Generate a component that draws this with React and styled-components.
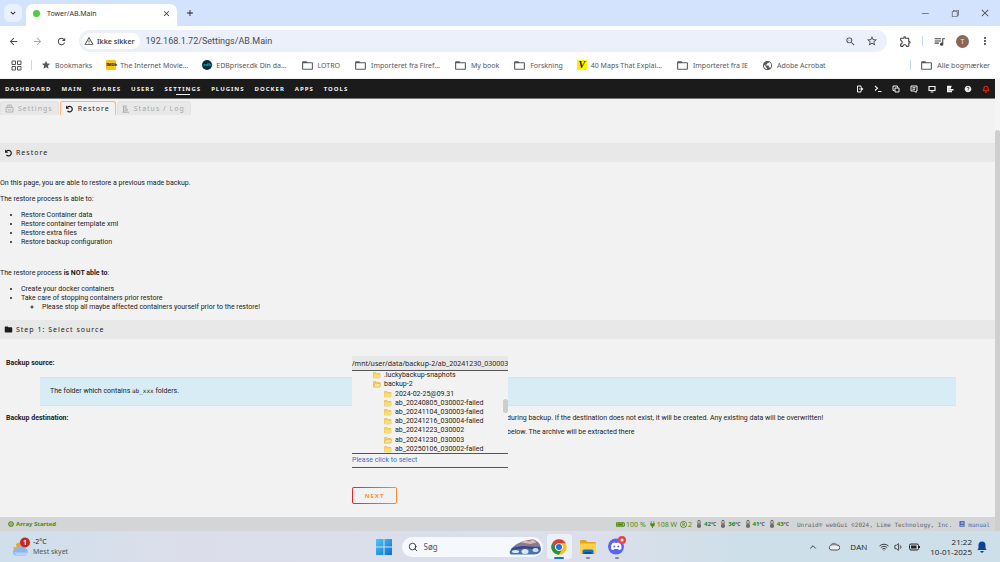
import React, { useState } from 'react';
import styled, { createGlobalStyle, css } from 'styled-components';
import {
  MdAdd,
  MdArrowBack,
  MdArrowForward,
  MdClose,
  MdFolder,
  MdFolderOpen,
  MdHelp,
  MdKeyboardArrowDown,
  MdMoreVert,
  MdOutlineExtension,
  MdPublic,
  MdQueueMusic,
  MdRefresh,
  MdStar,
  MdStarBorder,
  MdWarningAmber,
  MdZoomOut,
} from 'react-icons/md';
import { FaBatteryFull, FaBook, FaPlug, FaRegUserCircle, FaThermometerHalf } from 'react-icons/fa';
import { VscChromeClose, VscChromeMinimize, VscChromeRestore } from 'react-icons/vsc';
import { ChevronUp, Search, Volume1, Wifi } from 'lucide-react';

const GlobalStyle = createGlobalStyle`
  * {
    box-sizing: border-box;
  }

  body {
    margin: 0;
    background: #f2f2f2;
    font-family: 'Noto Sans', sans-serif;
    font-size: 6px;
    color: #1c1b1b;
  }

  button {
    border: none;
    background: none;
    padding: 0;
    font: inherit;
    color: inherit;
    cursor: pointer;
  }

  a {
    color: inherit;
    text-decoration: none;
  }

  svg {
    display: block;
    flex: none;
  }
`;

const bodyFont = css`
  font-family: Roboto, 'Noto Sans', sans-serif;
  font-size: 7px;
`;

const Screen = styled.div`
  display: flex;
  flex-direction: column;
  min-height: 100vh;
`;

/* ---------- browser ---------- */

const TabStrip = styled.div`
  display: flex;
  align-items: flex-end;
  height: 26px;
  padding-left: 4px;
  background: #d3e2fd;
`;

const TabSearch = styled.button`
  display: grid;
  place-items: center;
  width: 18px;
  height: 18px;
  margin-bottom: 4px;
  border-radius: 6px;
  background: #e9f0fe;
`;

const BrowserTab = styled.div`
  display: flex;
  align-items: center;
  width: 151px;
  height: 22px;
  margin-left: 4px;
  padding: 0 6px 4px 7px;
  border-radius: 7px 7px 0 0;
  background: #fff;
  font-size: 7px;
  color: #333;

  span {
    flex: 1;
  }
`;

const Favicon = styled.i`
  width: 7px;
  height: 7px;
  margin-right: 7px;
  border-radius: 50%;
  background: #4fce3a;
`;

const NewTab = styled.button`
  margin: 0 auto 8px 8px;
`;

const WindowControls = styled.div`
  display: flex;
  gap: 20px;
  margin: 0 10px 8px 0;
  color: #444;
`;

const Toolbar = styled.div`
  display: flex;
  align-items: center;
  height: 30px;
  padding: 0 9px 0 8px;
  background: #fff;
  color: #444;
`;

const NavButtons = styled.div`
  display: flex;
  gap: 13px;
  margin-right: 12px;

  button:nth-child(2) {
    color: #aaa;
  }
`;

const Omnibox = styled.div`
  display: flex;
  align-items: center;
  flex: 1;
  height: 22px;
  padding: 0 9px 0 3px;
  border-radius: 11px;
  background: #ebf0fa;
`;

const SecurityChip = styled.button`
  display: flex;
  align-items: center;
  gap: 3px;
  height: 16px;
  padding: 0 5px 0 2px;
  border-radius: 8px;
  background: #fff;
  font-size: 7px;
  font-weight: 600;
  white-space: nowrap;
`;

const Url = styled.input`
  flex: 1;
  min-width: 0;
  margin-left: 6px;
  padding: 0;
  border: none;
  outline: none;
  background: none;
  font-family: Roboto, 'Noto Sans', sans-serif;
  font-size: 9px;
  color: #4a4d52;
`;

const OmniActions = styled.div`
  display: flex;
  gap: 10px;
`;

const ToolbarActions = styled.div`
  display: flex;
  align-items: center;
  gap: 10px;
  margin-left: 12px;
`;

const Divider = styled.span`
  width: 1px;
  height: 10px;
  background: #c3d7f8;
`;

const Avatar = styled.button`
  width: 13px;
  height: 13px;
  border-radius: 50%;
  background: #8d6557;
  color: #f3e9e5;
  font-size: 7px;
  line-height: 13px;
`;

const BookmarkBar = styled.nav`
  display: flex;
  align-items: center;
  gap: 9px;
  height: 22px;
  margin-bottom: 1px;
  padding: 0 10px 4px 11px;
  background: #fff;
  font-size: 7px;
  color: #55585c;
  white-space: nowrap;
`;

const Bookmarks = styled.div`
  display: flex;
  align-items: center;
  gap: 14px;
  margin-right: auto;
`;

const Bookmark = styled.a`
  display: flex;
  align-items: center;
  gap: 4px;
`;

const SiteIcon = styled.i`
  display: grid;
  place-items: center;
  width: 10px;
  height: 10px;
  border-radius: ${(p) => (p.$round ? '50%' : '1px')};
  background: ${(p) => p.$bg};
  color: ${(p) => p.$fg};
  font-size: 4px;
  font-weight: 800;
  font-style: normal;
  line-height: 10px;
`;

const SerifMark = styled.b`
  font-family: 'Liberation Serif', serif;
  font-size: 10px;
  font-style: italic;
`;

/* ---------- unraid page ---------- */

const Viewport = styled.div`
  display: flex;
  flex: 1;
`;

const Page = styled.div`
  display: flex;
  flex-direction: column;
  flex: 1;
  min-width: 0;
  background: #f2f2f2;
`;

const Scrollbar = styled.div`
  width: 5px;
  padding-top: 51px;
  background: #f4f4f4;

  &::before {
    content: '';
    display: block;
    height: 100%;
    border-radius: 3px 3px 0 0;
    background: #cfcfcf;
  }
`;

const Menu = styled.nav`
  display: flex;
  align-items: center;
  height: 20px;
  border-bottom: 1px solid #777;
  background: #1c1b1b;
  color: #f2f2f2;
`;

const MenuItem = styled.a`
  position: relative;
  padding: 0 5px;
  font-size: 6px;
  font-weight: 700;
  letter-spacing: 1px;
  line-height: 12px;
  text-transform: uppercase;

  ${(p) =>
    p.$active &&
    css`
      &::after {
        content: '';
        position: absolute;
        left: 16px;
        right: 16px;
        bottom: 0;
        height: 1px;
        background: #f2f2f2;
      }
    `}
`;

const MenuTools = styled.div`
  display: flex;
  gap: 10px;
  margin-left: auto;
  padding-right: 5px;
`;

const ToolButton = styled.button`
  color: ${(p) => (p.$alert ? '#f0260a' : '#f2f2f2')};
`;

const Tabs = styled.div`
  display: flex;
  gap: 1px;
  height: 16px;
  padding-top: 2px;
`;

const Tab = styled.button`
  display: flex;
  align-items: center;
  gap: 4px;
  padding: 0 5px 0 4px;
  border: 1px solid ${(p) => (p.$active ? '#ffb27c' : '#e2e2e2')};
  border-bottom: none;
  border-radius: 3px 3px 0 0;
  background: ${(p) => (p.$active ? '#f2f2f2' : '#e8e8e8')};
  color: ${(p) => (p.$active ? '#1c1b1b' : '#a9a9a9')};
  font-size: 7px;
  letter-spacing: 1px;
  line-height: 12px;
`;

const Title = styled.h2`
  display: flex;
  align-items: center;
  gap: 3px;
  height: 19px;
  margin: 0;
  padding: 0 5px 0 4px;
  background: #e8e8e8;
  font-size: 7px;
  font-weight: 400;
  letter-spacing: 1px;
`;

const Content = styled.main`
  ${bodyFont}
  flex: 1;
  padding-top: 28px;

  h2 {
    font-family: 'Noto Sans', sans-serif;
  }
`;

const Intro = styled.section`
  padding: 17px 0 8px;
  line-height: 9px;

  p {
    margin: 0 0 7px;
  }

  ul {
    margin: 0 0 22px;
    padding-left: 21px;
  }

  ul ul,
  ul:last-child {
    margin-bottom: 0;
  }
`;

const Form = styled.form`
  padding-top: 17px;
`;

const Field = styled.div`
  display: grid;
  grid-template-columns: 346px 1fr;
  padding-left: 6px;
  line-height: 15px;

  > label {
    font-weight: 700;
  }
`;

const Picker = styled.div`
  position: relative;
  width: 156px;
`;

const PathInput = styled.input`
  display: block;
  width: 100%;
  height: 15px;
  padding: 0;
  border: none;
  border-bottom: 1px solid #555;
  border-radius: 0;
  outline: none;
  background: ${(p) => (p.$filled ? '#e8e8e8' : 'transparent')};
  font-family: ${(p) => (p.$filled ? "'Noto Sans', sans-serif" : 'inherit')};
  font-size: 7px;
  color: #1c1b1b;

  &::placeholder {
    color: #486dba;
    opacity: 1;
  }
`;

const Tree = styled.div`
  position: absolute;
  top: 15px;
  left: 0;
  right: 0;
  z-index: 1;
  display: flex;
  align-items: flex-end;
  height: 83px;
  overflow: hidden;
  border-bottom: 1px solid #555;
  background: #f2f2f2;
`;

const TreeList = styled.ul`
  display: grid;
  grid-auto-rows: 1fr;
  flex: 1;
  height: 83px;
  margin: 0;
  padding: 0;
  list-style: none;
`;

const TreeItem = styled.li`
  display: flex;
  align-items: center;
  gap: 3px;
  padding: 1px 0 0 ${(p) => 10 + p.$level * 11}px;
  line-height: 8px;
  white-space: nowrap;
`;

const TreeThumb = styled.span`
  align-self: center;
  width: 5px;
  height: 14px;
  border-radius: 3px;
  margin-bottom: 12px;
  background: #cdcdcd;
`;

const Help = styled.blockquote`
  margin: 6px 39px 5px 40px;
  padding: 7px 10px;
  border: solid #c8e7f0;
  border-width: 1px 0;
  background: #d8ecf5;
  line-height: 13px;

  code {
    font-family: 'DejaVu Sans Mono', monospace;
    font-size: 6px;
    line-height: 1;
  }
`;

const Notes = styled.div`
  padding: 0 0 14px 155px;
  line-height: 14px;

  p {
    margin: 0;
    white-space: nowrap;
  }
`;

const NextButton = styled.button`
  width: 45px;
  height: 17px;
  margin: 19px 0 12px 352px;
  border: 1px solid transparent;
  border-radius: 2px;
  background:
    linear-gradient(#f2f2f2, #f2f2f2) padding-box,
    linear-gradient(90deg, #e22828, #ff8c2f) border-box;
  color: #ff8c2f;
  font-family: 'Noto Sans', sans-serif;
  font-size: 6px;
  font-weight: 700;
  letter-spacing: 1px;
`;

const Footer = styled.footer`
  display: flex;
  align-items: center;
  height: 14px;
  padding: 0 5px 0 8px;
  background: #d4d5d6;
  color: #4f8a10;
`;

const ArrayState = styled.strong`
  display: flex;
  align-items: center;
  gap: 2px;
  margin-right: auto;
`;

const Stats = styled.div`
  display: flex;
  align-items: center;
  gap: 3px;
`;

const Stat = styled.span`
  display: flex;
  align-items: center;
  gap: 1px;
  font-size: 7px;
`;

const Temp = styled.span`
  display: flex;
  align-items: center;
  gap: 1px;
  font-weight: 700;
  color: #0b8a1c;

  svg,
  small {
    color: #555;
  }

  small {
    font-size: 5px;
  }
`;

const Copyright = styled.div`
  display: flex;
  align-items: center;
  gap: 7px;
  margin-left: 8px;
  font-family: 'DejaVu Sans Mono', monospace;
  color: #666;
  white-space: pre;

  a {
    display: flex;
    align-items: center;
    gap: 3px;
    color: #486dba;
  }
`;

/* ---------- windows taskbar ---------- */

const Taskbar = styled.div`
  display: grid;
  grid-template-columns: 1fr auto 1fr;
  align-items: center;
  height: 31px;
  background: linear-gradient(90deg, #cfdfec 0%, #dbdeea 18%, #dadfeb 60%, #cddfe9 75%, #cddfe9 100%);
  font-size: 7px;
  line-height: 10px;
  color: #222;
`;

const Weather = styled.button`
  display: flex;
  align-items: center;
  gap: 3px;
  padding-left: 12px;
  text-align: left;

  small {
    display: block;
    font-size: 7px;
    color: #555;
  }
`;

const Apps = styled.div`
  display: flex;
  align-items: center;
  gap: 4px;
  padding-left: 5px;
`;

const SearchBox = styled.label`
  display: flex;
  align-items: center;
  gap: 6px;
  width: 141px;
  height: 20px;
  margin-left: 6px;
  padding: 0 1px 0 6px;
  border-radius: 10px;
  background: #f5f8fc;

  input {
    flex: 1;
    min-width: 0;
    padding: 0;
    border: none;
    outline: none;
    background: none;
    font: inherit;
    font-size: 8px;
  }

  input::placeholder {
    color: #555;
    opacity: 1;
  }
`;

const AppButton = styled.button`
  display: flex;
  flex-direction: column;
  align-items: center;
  justify-content: flex-end;
  gap: 2px;
  width: 25px;
  height: 25px;
  border-radius: 3px;
  background: ${(p) => (p.$active ? '#ecf1f8' : 'transparent')};

  &::after {
    content: '';
    width: ${(p) => (p.$active ? 10 : 4)}px;
    height: 2px;
    border-radius: 1px;
    background: ${(p) => (p.$active ? '#0f78d4' : '#808890')};
  }
`;

const Tray = styled.div`
  display: flex;
  align-items: center;
  justify-content: flex-end;
  padding-right: 13px;
  font-family: 'Open Sans', 'Noto Sans', sans-serif;
  font-size: 8px;
`;

const TrayGroup = styled.div`
  display: flex;
  align-items: center;
  gap: ${(p) => p.$gap}px;
  margin-right: ${(p) => p.$after}px;
`;

const Clock = styled.time`
  margin-right: 5px;
  text-align: right;
`;

/* ---------- drawings ---------- */

const UndoIcon = () => (
  <svg width="9" height="8" viewBox="0 0 18 16" fill="none" stroke="currentColor" strokeWidth="2.4">
    <path d="M5 4.500A5.500 5.500 0 1 1 5 12" />
    <path d="M2 1v6.500h6.500z" fill="currentColor" stroke="none" />
  </svg>
);

const SettingsTabIcon = () => (
  <svg width="9" height="9" viewBox="0 0 18 18" fill="none" stroke="currentColor" strokeWidth="1.6">
    <path d="M4 7l1-5h8l1 5M2 7h14v9H2zM5 11.500h8M7 4.500h4" />
  </svg>
);

const LogTabIcon = () => (
  <svg width="8" height="8" viewBox="0 0 16 16" fill="none" stroke="currentColor" strokeWidth="1.8">
    <path d="M1 2h9M3 2v12M3 5.500h7M6 8.500h6M3 11.500h8M1 14.500h13" />
  </svg>
);

const AppsGridIcon = () => (
  <svg width="11" height="11" viewBox="0 0 22 22" fill="none" stroke="#555" strokeWidth="2">
    <path d="M2 2h7v7H2zM13 2h7v7h-7zM2 13h7v7H2zM13 13h7v7h-7z" />
  </svg>
);

const LogoutIcon = () => (
  <svg width="8" height="8" viewBox="0 0 16 16" fill="none" stroke="currentColor" strokeWidth="2">
    <path d="M10 5V2H3v12h7v-3M6 8h5" />
    <path d="M10 4l5 4-5 4z" fill="currentColor" stroke="none" />
  </svg>
);

const TerminalIcon = () => (
  <svg width="8" height="8" viewBox="0 0 16 16" fill="none" stroke="currentColor" strokeWidth="2.2">
    <path d="M2 2l5 4.500L2 11M8 13h7" />
  </svg>
);

const CopyIcon = () => (
  <svg width="8" height="8" viewBox="0 0 16 16" fill="none" stroke="currentColor" strokeWidth="2">
    <path d="M6 6h8v8H6zM11 5V2H2v9h3" />
  </svg>
);

const FeedbackIcon = () => (
  <svg width="8" height="8" viewBox="0 0 16 16" fill="none" stroke="currentColor" strokeWidth="2">
    <path d="M2 2h12v10h-2v3l-3-3H2zM5 5.500h6M5 8.500h5" />
  </svg>
);

const MonitorIcon = () => (
  <svg width="8" height="8" viewBox="0 0 16 16" fill="none" stroke="currentColor" strokeWidth="2.4">
    <path d="M2 3h12v8H2zM5 14h6" />
  </svg>
);

const LogIcon = () => (
  <svg width="8" height="8" viewBox="0 0 16 16" fill="none" stroke="currentColor" strokeWidth="2.6">
    <path d="M2 3h9M2 6h8M2 9.500h13M2 13h10M3.500 2v12" />
  </svg>
);

const AlertIcon = () => (
  <svg width="8" height="8" viewBox="0 0 16 16" fill="none" stroke="currentColor" strokeWidth="2.4">
    <path d="M2 11.500c2-1 2-3 2-5a4 4 0 0 1 8 0c0 2 0 4 2 5zM6 14.500h4" />
  </svg>
);

const FolderPic = ({ open }) => (
  <svg width="8" height="8" viewBox="0 0 16 16">
    <path d="M1 3h5l2 2h6v9H1z" fill="#f6cf4f" stroke="#dfae38" />
    {open ? (
      <path d="M4 7h12l-3 7H1z" fill="#fbe595" stroke="#dcae43" />
    ) : (
      <path d="M1 7h13v7H1z" fill="#fbdc74" />
    )}
  </svg>
);

const WeatherIcon = () => (
  <svg width="18" height="20" viewBox="0 0 36 40">
    <path d="M2 20l7 1-1-7 8-4 4 14-12 6z" fill="#f7a21b" />
    <path d="M9 37a7 7 0 0 1 0-14 10 10 0 0 1 17-1 8 8 0 0 1 1 15z" fill="#8bb4f0" />
    <path d="M9 36a6 6 0 0 1-5-5h28c-1 4-3 5-5 5z" fill="#b8d3fb" />
    <circle cx="26" cy="11" r="10" fill="#c42b1c" />
    <text x="26" y="16" textAnchor="middle" fontSize="14" fontWeight="600" fill="#fff">
      1
    </text>
  </svg>
);

const WindowsLogo = () => (
  <svg width="16" height="16" viewBox="0 0 32 32">
    <defs>
      <linearGradient id="win" x1="0" y1="0" x2="1" y2="1">
        <stop offset="0" stopColor="#4cc8f5" />
        <stop offset="1" stopColor="#0a6fd0" />
      </linearGradient>
    </defs>
    <path d="M0 0h15v15H0zM17 0h15v15H17zM0 17h15v15H0zM17 17h15v15H17z" fill="url(#win)" />
  </svg>
);

const SearchArt = () => (
  <svg width="33" height="17" viewBox="0 0 66 34">
    <path d="M2 26C8 14 28 4 48 3c10 3 16 12 16 20-1 8-8 10-16 10H6c-5 0-5-4-4-7z" fill="#4573ad" />
    <path d="M10 17C20 8 34 4 48 3c9 3 13 8 15 14z" fill="#8d7796" />
    <path d="M24 9l10-5 6 3 8-4 7 6-12 3z" fill="#d9b8b5" />
    <path d="M6 20l22-4 34 3v4L30 21 4 24z" fill="#3d4777" />
    <ellipse cx="13" cy="27" rx="7" ry="3" fill="#dce8f7" />
    <ellipse cx="32" cy="27" rx="7" ry="5" fill="#dce8f7" />
    <ellipse cx="53" cy="24" rx="6" ry="4" fill="#cbdcf2" />
  </svg>
);

const ChromeLogo = () => (
  <svg width="16" height="16" viewBox="0 0 48 48">
    <circle cx="24" cy="24" r="23" fill="#fbc116" />
    <path d="M4 12.500A23 23 0 0 1 44 12.500H24a11.500 11.500 0 0 0-10 17.200z" fill="#e33b2e" />
    <path d="M4 12.500l10 17.200a11.500 11.500 0 0 0 20 0L24 47A23 23 0 0 1 4 12.500z" fill="#229342" />
    <circle cx="24" cy="24" r="11.500" fill="#fff" />
    <circle cx="24" cy="24" r="9" fill="#1a73e8" />
  </svg>
);

const ExplorerLogo = () => (
  <svg width="16" height="16" viewBox="0 0 32 32">
    <path d="M0 4q0-2 2-2h9l4 4h15q2 0 2 2v8H0z" fill="#e8a317" />
    <path d="M0 9h32v19q0 2-2 2H2q-2 0-2-2z" fill="#ffd04c" />
    <path d="M5 30v-6q0-3 3-3h16q3 0 3 3v6z" fill="#1173c6" />
    <path d="M9 26h14v4H9z" fill="#0b4f8a" />
  </svg>
);

const DiscordLogo = () => (
  <svg width="18" height="19" viewBox="0 0 36 38">
    <circle cx="16" cy="21" r="16" fill="#5865f2" />
    <path
      d="M8 15q4-3 6-2l1 1h3l1-1q3-1 6 2 3 6 2 11-3 2-5 2l-2-2h-7l-2 2q-3 0-5-2-1-6 2-11z"
      fill="#fff"
    />
    <circle cx="12.500" cy="21" r="2" fill="#5865f2" />
    <circle cx="20.500" cy="21" r="2" fill="#5865f2" />
    <circle cx="28" cy="8" r="8" fill="#ed4245" />
    <circle cx="28" cy="8" r="3" fill="#fff" />
  </svg>
);

const CloudIcon = () => (
  <svg width="12" height="10" viewBox="0 0 24 20" stroke="#444" strokeWidth="1.8">
    <path d="M6 16a5 5 0 0 1-1-9 7.500 7.500 0 0 1 13-1 5 5 0 0 1 1 10z" fill="#eee" />
    <path d="M4 9q8-5 17 0l-1-3-5-4H9z" fill="#888" stroke="none" />
  </svg>
);

const BatteryIcon = () => (
  <svg width="11" height="8" viewBox="0 0 22 16">
    <rect x="1" y="2" width="18" height="12" rx="3" fill="none" stroke="#222" strokeWidth="2" />
    <rect x="4" y="5" width="11" height="6" fill="#222" />
    <path d="M20 6h2v4h-2z" fill="#222" />
  </svg>
);

const BellIcon = () => (
  <svg width="10" height="12" viewBox="0 0 20 24" fill="#0a4595">
    <path d="M10 1a7 7 0 0 1 7 7v6l2 4H1l2-4V8a7 7 0 0 1 7-7zM6.500 20h7a3.500 3.500 0 0 1-7 0z" />
  </svg>
);

const ArrayIcon = () => (
  <svg width="6" height="6" viewBox="0 0 12 12" fill="none" stroke="currentColor">
    <circle cx="6" cy="6" r="4.500" strokeWidth="2.4" />
    <path d="M5 3.500L8.500 6 5 8.500z" fill="currentColor" stroke="none" />
  </svg>
);

/* ---------- data ---------- */

const folder = <MdFolderOpen size={13} />;

const bookmarks = [
  { label: 'Bookmarks', icon: <MdStar size={10} /> },
  { label: 'The Internet Movie...', icon: <SiteIcon $bg="#f5c518" $fg="#1c1b1b">IMDb</SiteIcon> },
  { label: 'EDBpriser.dk Din da...', icon: <SiteIcon $round $bg="#0b2c38" $fg="#19a3b5">edb</SiteIcon> },
  { label: 'LOTRO', icon: folder },
  { label: 'Importeret fra Firef...', icon: folder },
  { label: 'My book', icon: folder },
  { label: 'Forskning', icon: folder },
  { label: '40 Maps That Explai...', icon: <SiteIcon $bg="#fff200" $fg="#1c1b1b"><SerifMark>V</SerifMark></SiteIcon> },
  { label: 'Importeret fra IE', icon: folder },
  { label: 'Adobe Acrobat', icon: <MdPublic size={11} /> },
];

const menu = ['Dashboard', 'Main', 'Shares', 'Users', 'Settings', 'Plugins', 'Docker', 'Apps', 'Tools'];

const tools = [
  { label: 'Logout', icon: <LogoutIcon /> },
  { label: 'Terminal', icon: <TerminalIcon /> },
  { label: 'File manager', icon: <CopyIcon /> },
  { label: 'Feedback', icon: <FeedbackIcon /> },
  { label: 'Info', icon: <MonitorIcon /> },
  { label: 'Log', icon: <LogIcon /> },
  { label: 'Help', icon: <MdHelp size={8} /> },
  { label: 'Notifications', icon: <AlertIcon />, alert: true },
];

const tabs = [
  { label: 'Settings', icon: <SettingsTabIcon /> },
  { label: 'Restore', icon: <UndoIcon /> },
  { label: 'Status / Log', icon: <LogTabIcon /> },
];

const tree = [
  { name: '.luckybackup-snaphots', level: 1 },
  { name: 'backup-2', level: 1, open: true },
  { name: '2024-02-25@09.31', level: 2 },
  { name: 'ab_20240805_030002-failed', level: 2 },
  { name: 'ab_20241104_030003-failed', level: 2 },
  { name: 'ab_20241216_030004-failed', level: 2 },
  { name: 'ab_20241223_030002', level: 2 },
  { name: 'ab_20241230_030003', level: 2, open: true },
  { name: 'ab_20250106_030002-failed', level: 2 },
];

const temps = [42, 36, 41, 43];

const Browser = () => (
  <header>
    <TabStrip>
      <TabSearch aria-label="Search tabs">
        <MdKeyboardArrowDown size={10} />
      </TabSearch>
      <BrowserTab>
        <Favicon />
        <span>Tower/AB.Main</span>
        <button aria-label="Close tab">
          <MdClose size={9} />
        </button>
      </BrowserTab>
      <NewTab aria-label="New tab">
        <MdAdd size={10} />
      </NewTab>
      <WindowControls>
        <button aria-label="Minimize"><VscChromeMinimize size={10} /></button>
        <button aria-label="Restore window"><VscChromeRestore size={10} /></button>
        <button aria-label="Close window"><VscChromeClose size={10} /></button>
      </WindowControls>
    </TabStrip>
    <Toolbar>
      <NavButtons>
        <button aria-label="Back"><MdArrowBack size={11} /></button>
        <button aria-label="Forward"><MdArrowForward size={11} /></button>
        <button aria-label="Reload"><MdRefresh size={11} /></button>
      </NavButtons>
      <Omnibox>
        <SecurityChip>
          <MdWarningAmber size={10} />
          Ikke sikker
        </SecurityChip>
        <Url aria-label="Address" defaultValue="192.168.1.72/Settings/AB.Main" />
        <OmniActions>
          <button aria-label="Zoom"><MdZoomOut size={11} /></button>
          <button aria-label="Bookmark page"><MdStarBorder size={12} /></button>
        </OmniActions>
      </Omnibox>
      <ToolbarActions>
        <button aria-label="Extensions"><MdOutlineExtension size={13} /></button>
        <Divider />
        <button aria-label="Media"><MdQueueMusic size={13} /></button>
        <Avatar>T</Avatar>
        <button aria-label="Menu"><MdMoreVert size={12} /></button>
      </ToolbarActions>
    </Toolbar>
    <BookmarkBar>
      <button aria-label="Apps"><AppsGridIcon /></button>
      <Divider />
      <Bookmarks>
        {bookmarks.map((b) => (
          <Bookmark key={b.label} href="#">
            {b.icon}
            {b.label}
          </Bookmark>
        ))}
      </Bookmarks>
      <Divider />
      <Bookmark href="#">
        {folder}
        Alle bogmærker
      </Bookmark>
    </BookmarkBar>
  </header>
);

const RestorePage = () => {
  const [activeTab, setActiveTab] = useState('Restore');
  const [source, setSource] = useState('/mnt/user/data/backup-2/ab_20241230_030003/');

  return (
    <Page>
      <Menu>
        {menu.map((item) => (
          <MenuItem key={item} href="#" $active={item === 'Settings'}>
            {item}
          </MenuItem>
        ))}
        <MenuTools>
          {tools.map((t) => (
            <ToolButton key={t.label} aria-label={t.label} $alert={t.alert}>
              {t.icon}
            </ToolButton>
          ))}
        </MenuTools>
      </Menu>
      <Tabs>
        {tabs.map((t) => (
          <Tab key={t.label} $active={t.label === activeTab} onClick={() => setActiveTab(t.label)}>
            {t.icon}
            {t.label}
          </Tab>
        ))}
      </Tabs>
      <Content>
        <Title>
          <UndoIcon />
          Restore
        </Title>
        <Intro>
          <p>On this page, you are able to restore a previous made backup.</p>
          <p>The restore process is able to:</p>
          <ul>
            <li>Restore Container data</li>
            <li>Restore container template xml</li>
            <li>Restore extra files</li>
            <li>Restore backup configuration</li>
          </ul>
          <p>
            The restore process <b>is NOT able to</b>:
          </p>
          <ul>
            <li>Create your docker containers</li>
            <li>
              Take care of stopping containers prior restore
              <ul>
                <li>Please stop all maybe affected containers yourself prior to the restore!</li>
              </ul>
            </li>
          </ul>
        </Intro>
        <Title>
          <MdFolder size={9} />
          Step 1: Select source
        </Title>
        <Form onSubmit={(e) => e.preventDefault()}>
          <Field>
            <label htmlFor="source">Backup source:</label>
            <Picker>
              <PathInput id="source" $filled value={source} onChange={(e) => setSource(e.target.value)} />
              <Tree>
                <TreeList>
                  {tree.map((f) => (
                    <TreeItem key={f.name} $level={f.level}>
                      <FolderPic open={f.open} />
                      {f.name}
                    </TreeItem>
                  ))}
                </TreeList>
                <TreeThumb />
              </Tree>
            </Picker>
          </Field>
          <Help>
            The folder which contains <code>ab_xxx</code> folders.
          </Help>
          <Field>
            <label htmlFor="destination">Backup destination:</label>
            <div>
              <Notes>
                <p>during backup. If the destination does not exist, it will be created. Any existing data will be overwritten!</p>
                <p>below. The archive will be extracted there</p>
              </Notes>
              <Picker>
                <PathInput id="destination" placeholder="Please click to select" />
              </Picker>
            </div>
          </Field>
          <NextButton>NEXT</NextButton>
        </Form>
      </Content>
      <Footer>
        <ArrayState>
          <ArrayIcon />
          Array Started
        </ArrayState>
        <Stats>
          <Stat><FaBatteryFull size={9} />100 %</Stat>
          <Stat><FaPlug size={7} />108 W</Stat>
          <Stat><FaRegUserCircle size={7} />2</Stat>
          {temps.map((t) => (
            <Temp key={t}>
              <FaThermometerHalf size={8} />
              <span>{t}<small>°C</small></span>
            </Temp>
          ))}
        </Stats>
        <Copyright>
          Unraid® webGui ©2024, Lime Technology, Inc.
          <a href="#">
            <FaBook size={6} />
            manual
          </a>
        </Copyright>
      </Footer>
    </Page>
  );
};

const WindowsTaskbar = () => (
  <Taskbar>
    <Weather>
      <WeatherIcon />
      <span>
        -2°C
        <small>Mest skyet</small>
      </span>
    </Weather>
    <Apps>
      <button aria-label="Start"><WindowsLogo /></button>
      <SearchBox>
        <Search size={10} />
        <input aria-label="Search" placeholder="Søg" />
        <SearchArt />
      </SearchBox>
      <AppButton aria-label="Chrome" $active><ChromeLogo /></AppButton>
      <AppButton aria-label="File Explorer"><ExplorerLogo /></AppButton>
      <AppButton aria-label="Discord"><DiscordLogo /></AppButton>
    </Apps>
    <Tray>
      <TrayGroup $gap={10} $after={12}>
        <ChevronUp size={10} />
        <CloudIcon />
        DAN
      </TrayGroup>
      <TrayGroup $gap={5} $after={10}>
        <Wifi size={10} />
        <Volume1 size={10} />
        <BatteryIcon />
      </TrayGroup>
      <Clock>
        21:22
        <br />
        10-01-2025
      </Clock>
      <BellIcon />
    </Tray>
  </Taskbar>
);

const App = () => (
  <Screen>
    <GlobalStyle />
    <Browser />
    <Viewport>
      <RestorePage />
      <Scrollbar />
    </Viewport>
    <WindowsTaskbar />
  </Screen>
);

export default App;
